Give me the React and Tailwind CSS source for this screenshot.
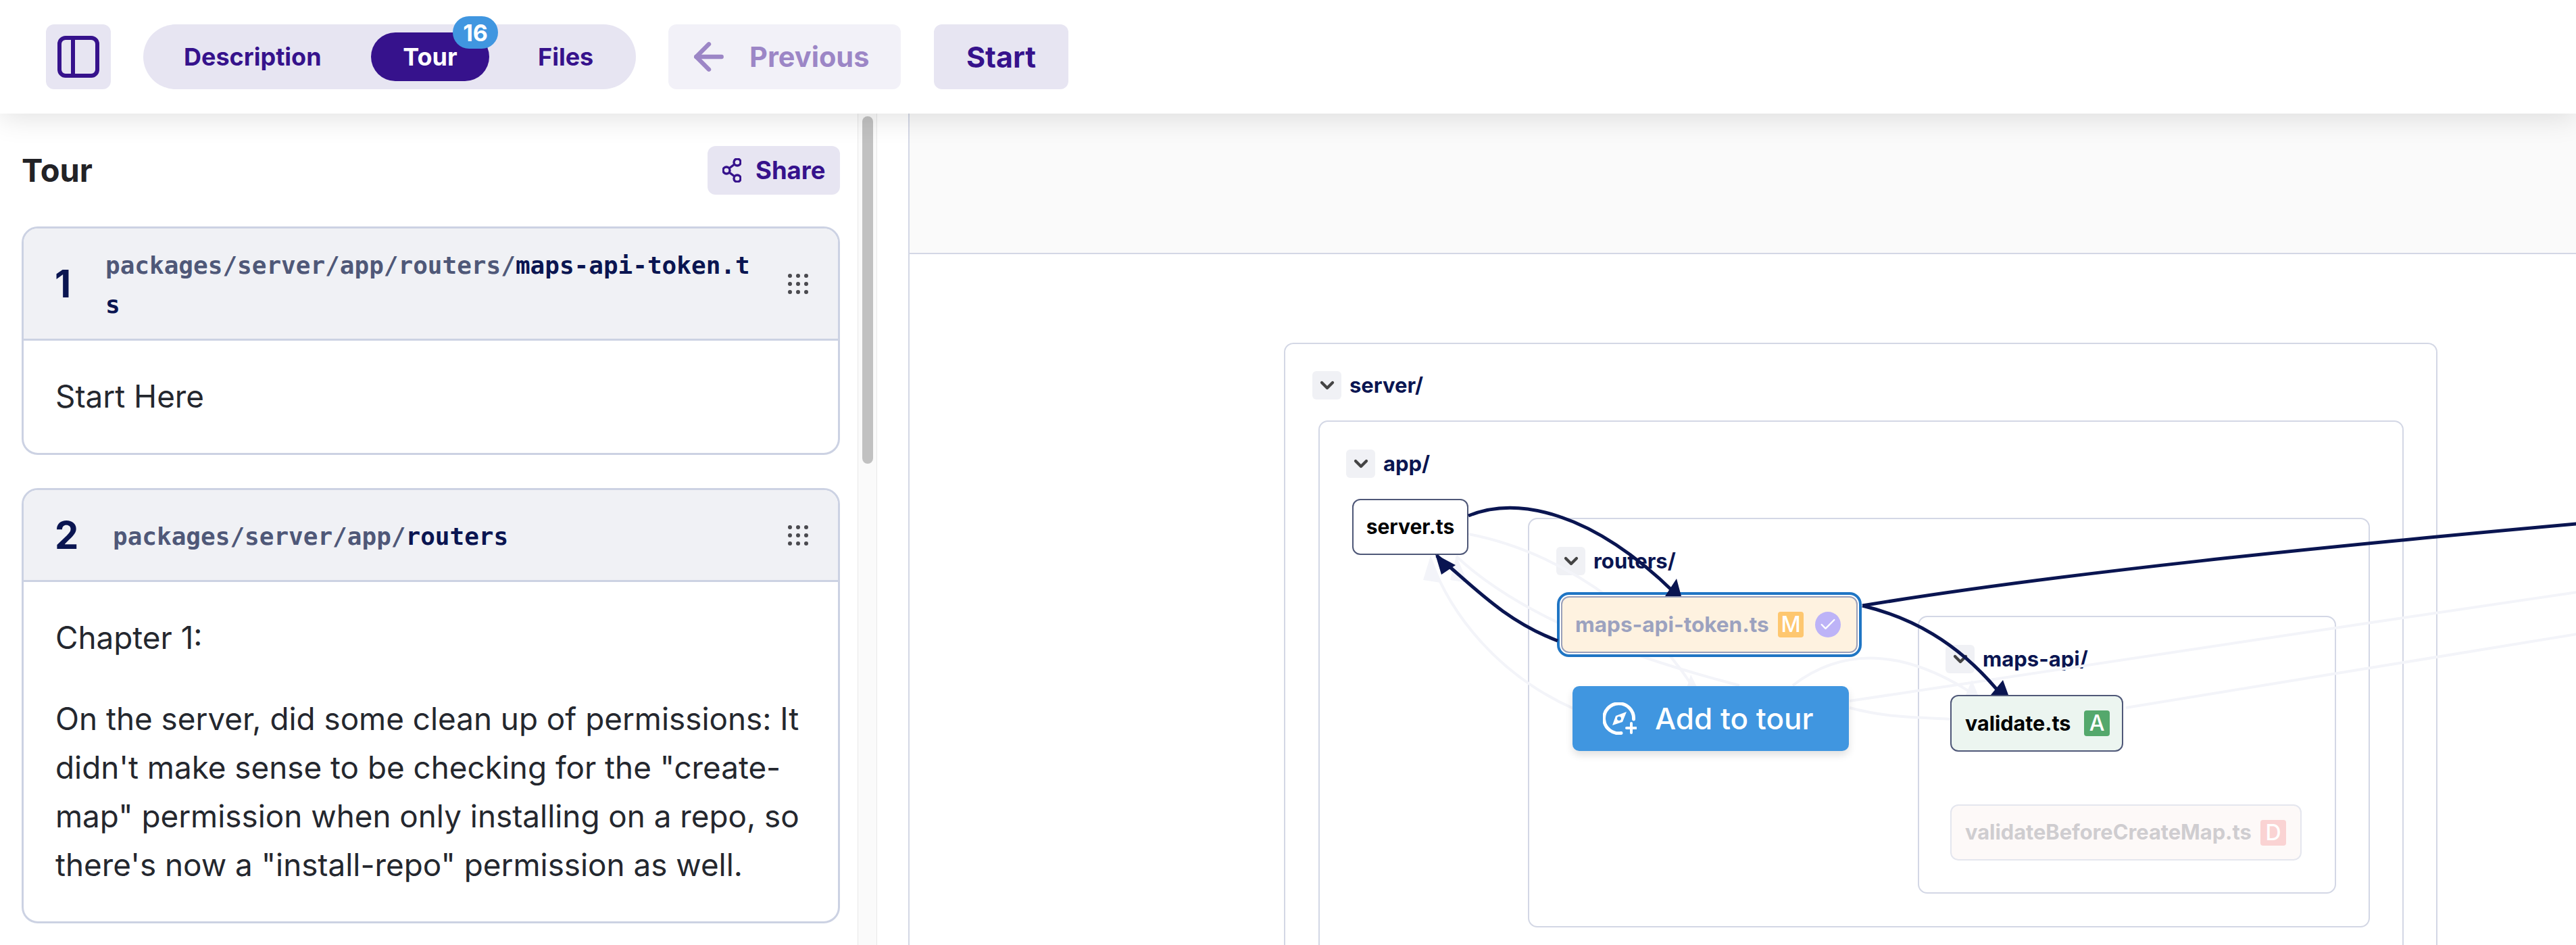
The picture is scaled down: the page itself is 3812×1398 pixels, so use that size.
import React from "react";
import { ArrowLeft, ChevronDown, Check } from "lucide-react";

const ui = "font-['Inter','Open_Sans',sans-serif]";
const mono = "font-['DejaVu_Sans_Mono',monospace]";

const Grip = () => (
  <svg width="32" height="32" viewBox="0 0 32 32" className="shrink-0 fill-[#4a4a4f]">
    {[4, 16, 28].map((y) =>
      [4, 16, 28].map((x) => <circle key={`${x}-${y}`} cx={x} cy={y} r="3" />)
    )}
  </svg>
);

const TourCard = ({ num, dir, name, headerClass, numClass, children }) => (
  <div className="rounded-[24px] border-[3px] border-[#ccd2e3] bg-white overflow-hidden">
    <div className={`flex items-center bg-[#f0f1f5] border-b-[3px] border-[#ccd2e3] pl-[46px] pr-[43px] ${headerClass}`}>
      <span className={`text-[56px] leading-none font-bold text-[#0a1551] ${numClass}`}>{num}</span>
      <p className={`${mono} flex-1 min-w-0 pr-[40px] pt-[4px] text-[36px] leading-[58px] font-bold text-[#0a1551] break-all`}>
        <span className="text-[#4f5878]">{dir}</span>
        {name}
      </p>
      <Grip />
    </div>
    <div className="px-[47px] py-[47px] text-[45.800px] leading-[72px] text-[#24272e]">{children}</div>
  </div>
);

const Sidebar = () => (
  <aside className="w-[1269px] shrink-0 pl-[32px] pr-[26px] pt-[48px] bg-white">
    <div className="flex items-center justify-between h-[72px] mb-[47px]">
      <h2 className="text-[47px] font-bold text-[#222226]">Tour</h2>
      <button className="flex items-center gap-[21px] h-[72px] w-[196px] pl-[22px] rounded-[12px] bg-[#e7e5f2] text-[#36128c] text-[36.500px] font-bold">
        <svg width="28" height="36" viewBox="0 0 28 36" fill="none" stroke="currentColor" strokeWidth="3.400">
          <circle cx="22" cy="6" r="5" />
          <circle cx="6" cy="18" r="5" />
          <circle cx="22" cy="30" r="5" />
          <path d="M10 15 18 9M10 21l8 6" />
        </svg>
        Share
      </button>
    </div>
    <div className="flex flex-col gap-[49px]">
      <TourCard
        num="1"
        dir="packages/server/app/routers/"
        name="maps-api-token.ts"
        headerClass="h-[166px]"
        numClass="w-[75px]"
      >
        Start Here
      </TourCard>
      <TourCard
        num="2"
        dir="packages/server/app/"
        name="routers"
        headerClass="h-[136px]"
        numClass="w-[86px]"
      >
        <p className="mb-[48px]">Chapter 1:</p>
        <p>
          On the server, did some clean up of permissions: It didn't make sense to be checking for the "create-map"
          permission when only installing on a repo, so there's now a "install-repo" permission as well.
        </p>
      </TourCard>
    </div>
  </aside>
);

const Scrollbar = () => (
  <div className="w-[29px] shrink-0 bg-[#fafafa] border-x border-[#e8e8e8] pt-[4px] flex justify-center">
    <div className="w-[16px] h-[514px] rounded-full bg-[#c1c1c1]" />
  </div>
);

const Folder = ({ x, y, w, h, label, labelClass }) => (
  <div
    className="absolute rounded-[14px] border-[2px] border-[#d3d7e5] bg-white/50"
    style={{ left: x, top: y, width: w, height: h }}
  >
    <div className={`absolute flex items-center gap-[12px] ${labelClass}`}>
      <span className="flex items-center justify-center w-[43px] h-[42px] rounded-[6px] bg-[#f0f1f5] text-[#444]">
        <ChevronDown size={32} strokeWidth={3.200} />
      </span>
      <span className="text-[31px] font-bold text-[#0a1551]">{label}</span>
    </div>
  </div>
);

const Badge = ({ letter, className }) => (
  <span className={`flex items-center justify-center w-[38px] h-[38px] rounded-[4px] text-[32px] font-medium text-white ${className}`}>
    {letter}
  </span>
);

// canvas origin sits at 1345,168 of the page
const faint = [
  "M827 622C920 640 1060 700 1158 846",
  "M809 655C900 740 1050 800 1228 846",
  "M771 659C800 740 870 830 982 880",
  "M1307 846C1380 790 1470 790 1576 860",
  "M1391 869C1700 822 2100 762 2467 708",
  "M1391 879C1450 895 1500 893 1543 896",
  "M1800 879C2000 846 2250 806 2467 770",
];

const Edges = ({ dark }) => (
  <svg className="absolute left-0 top-0 pointer-events-none" width="2467" height="1230" fill="none">
    {!dark &&
      faint.map((d) => <path key={d} d={d} stroke="#f3f4f9" strokeWidth="4" />)}
    {!dark && (
      <g fill="#f3f4f9">
        <path d="M771 654 786 694 760 690ZM809 654 826 694 800 690ZM1156 830 1166 850 1150 850ZM1572 838 1582 862 1562 862Z" />
      </g>
    )}
    {dark && (
      <g stroke="#0a1551" strokeWidth="5">
        <path d="M827 595C900 565 1010 590 1131 708" />
        <path d="M959 780C880 750 835 700 780 654" />
        <path d="M1410 728C1700 680 2100 640 2467 607" />
        <path d="M1410 728C1480 745 1550 780 1614 858" />
      </g>
    )}
    {dark && (
      <g fill="#0a1551">
        <path d="M1135 688 1142 714 1118 714ZM778 652 808 668 787 682ZM1618 838 1626 860 1600 860Z" />
      </g>
    )}
  </svg>
);

const Canvas = () => (
  <main className="relative flex-1 bg-white border-l-[2px] border-[#d3d7e5] overflow-hidden">
    <div className="h-[208px] bg-[#fafafa] border-b-[2px] border-[#d3d7e5]" />
    <Folder x={554} y={339} w={1707} h={1100} label="server/" labelClass="left-[40px] top-[38px]" />
    <Folder x={605} y={454} w={1606} h={900} label="app/" labelClass="left-[39px] top-[39px]" />
    <Folder x={915} y={598} w={1246} h={606} label="routers/" labelClass="left-[40px] top-[39px]" />
    <Folder x={1492} y={743} w={619} h={411} label="maps-api/" labelClass="left-[39px] top-[39px]" />
    <Edges />

    <div className="absolute left-[655px] top-[570px] w-[172px] h-[83px] rounded-[12px] border-[2px] border-[#4f5878] bg-white flex items-center justify-center text-[30px] font-bold text-black">
      server.ts
    </div>

    <div className="absolute left-[958px] top-[708px] w-[451px] h-[96px] rounded-[18px] border-[4px] border-[#1f75c4] bg-white p-[2px]">
      <div className="flex items-center h-full rounded-[12px] border-[2px] border-[#9a9fb8] bg-[#fef2e0] pl-[19px] gap-[17px]">
        <span className="text-[31.500px] font-bold text-[#9ca2bf] w-[283px] whitespace-nowrap">maps-api-token.ts</span>
        <Badge letter="M" className="bg-[#fec76f]" />
        <span className="flex items-center justify-center w-[38px] h-[38px] rounded-full bg-[#bdb3f7] text-white">
          <Check size={28} strokeWidth={2} />
        </span>
      </div>
    </div>

    <button className="absolute left-[981px] top-[847px] w-[409px] h-[96px] rounded-[10px] bg-[#4096e0] shadow-[0_6px_12px_rgba(0,0,0,0.12)] text-white flex items-center pl-[45px] gap-[27px] text-[44px] font-medium">
      <svg width="50" height="48" viewBox="0 0 50 48" fill="none" className="shrink-0">
        <path d="M27 45.500A22 22 0 1 1 45.500 25" stroke="currentColor" strokeWidth="5" strokeLinecap="round" />
        <path d="M35 14 14 34 19 20ZM35 14 14 34 29 29Z" fill="currentColor" />
        <circle cx="24" cy="24" r="3" fill="#4096e0" />
        <path d="M35 38H49M42 31V45" stroke="currentColor" strokeWidth="4" strokeLinecap="round" />
      </svg>
      Add to tour
    </button>

    <div className="absolute left-[1540px] top-[860px] w-[256px] h-[84px] rounded-[12px] border-[2px] border-[#4f5878] bg-[#ecf5f0] flex items-center pl-[20px] gap-[18px] text-[30.500px] font-bold text-black">
      <span className="w-[158px] whitespace-nowrap">validate.ts</span>
      <Badge letter="A" className="bg-[#54a86c]" />
    </div>

    <div className="absolute left-[1540px] top-[1022px] w-[520px] h-[83px] rounded-[12px] border-[2px] border-[#e4e6ee] bg-[#fdf9f8] flex items-center pl-[20px] gap-[16px] text-[30.800px] font-bold text-[#cfcdd0]">
      <span className="w-[421px] whitespace-nowrap">validateBeforeCreateMap.ts</span>
      <Badge letter="D" className="bg-[#fad3d3]" />
    </div>

    <Edges dark />
  </main>
);

const TopBar = () => (
  <header className="relative z-10 h-[168px] bg-white flex items-center pl-[68px] shadow-[0_6px_40px_rgba(0,0,0,0.12)]">
    <button className="flex items-center justify-center w-[96px] h-[96px] rounded-[12px] bg-[#e7e5f2] mr-[48px]">
      <svg width="62" height="62" viewBox="0 0 62 62" fill="none" stroke="#36128c" strokeWidth="6">
        <rect x="3" y="3" width="56" height="56" rx="9" />
        <path d="M23 3V59" />
      </svg>
    </button>
    <div className="flex items-center w-[729px] h-[96px] rounded-full bg-[#e7e5f2] text-[36px] font-bold text-[#36128c] mr-[48px]">
      <span className="ml-[60px] w-[277px]">Description</span>
      <span className="relative flex items-center justify-center w-[175px] h-[72px] rounded-full bg-[#36128c] text-white">
        Tour
        <span className="absolute left-[121px] -top-[24px] flex items-center justify-center w-[67px] h-[48px] rounded-full bg-[#4096e0] text-[34px] font-bold">
          16
        </span>
      </span>
      <span className="ml-[72px]">Files</span>
    </div>
    <button className="flex items-center w-[344px] h-[96px] rounded-[12px] bg-[#f2f1f8] text-[#9c86c6] text-[41.500px] font-bold pl-[28px] gap-[28px] mr-[49px]">
      <ArrowLeft size={64} strokeWidth={2.400} />
      Previous
    </button>
    <button className="w-[199px] h-[96px] rounded-[12px] bg-[#e7e5f2] text-[#36128c] text-[43px] font-bold">
      Start
    </button>
  </header>
);

export default function App() {
  return (
    <div className={`${ui} w-[3812px] h-[1398px] overflow-hidden flex flex-col bg-white`}>
      <TopBar />
      <div className="flex flex-1 min-h-0">
        <Sidebar />
        <Scrollbar />
        <div className="w-[46px] shrink-0 bg-white" />
        <Canvas />
      </div>
    </div>
  );
}
